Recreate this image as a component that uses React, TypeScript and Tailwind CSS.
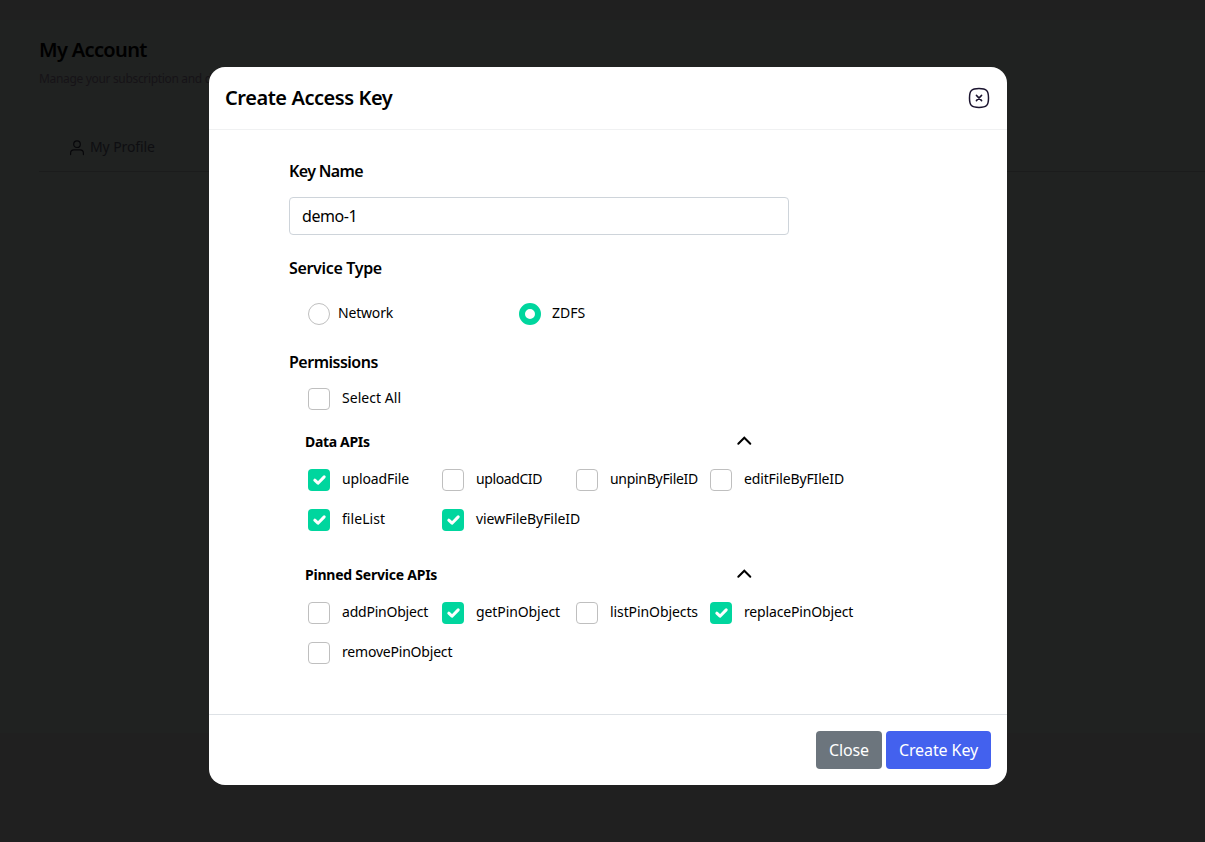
import { useState } from 'react';

type Permission = { name: string; on: boolean; tracking: string };

const dataApis: Permission[] = [
  { name: 'uploadFile', on: true, tracking: 'tracking-[-0.12px]' },
  { name: 'uploadCID', on: false, tracking: 'tracking-[-0.4px]' },
  { name: 'unpinByFileID', on: false, tracking: 'tracking-[-0.29px]' },
  { name: 'editFileByFIleID', on: false, tracking: 'tracking-[-0.14px]' },
  { name: 'fileList', on: true, tracking: 'tracking-[0.05px]' },
  { name: 'viewFileByFileID', on: true, tracking: 'tracking-[-0.08px]' },
];

const pinnedApis: Permission[] = [
  { name: 'addPinObject', on: false, tracking: 'tracking-[-0.22px]' },
  { name: 'getPinObject', on: true, tracking: 'tracking-[-0.09px]' },
  { name: 'listPinObjects', on: false, tracking: 'tracking-[-0.09px]' },
  { name: 'replacePinObject', on: true, tracking: 'tracking-[-0.16px]' },
  { name: 'removePinObject', on: false, tracking: 'tracking-[-0.2px]' },
];

function Checkbox({ name, on, tracking }: Permission) {
  const [checked, setChecked] = useState(on);
  return (
    <button
      type="button"
      role="checkbox"
      aria-checked={checked}
      onClick={() => setChecked(!checked)}
      className="flex h-[22px] items-start gap-3 text-left text-sm leading-5 whitespace-nowrap"
    >
      <span
        className={
          checked
            ? 'flex size-[22px] shrink-0 items-center justify-center rounded bg-[#00d69e]'
            : 'size-[22px] shrink-0 rounded border border-[#bfbfbf] bg-white'
        }
      >
        {checked && (
          <svg viewBox="0 0 22 22" className="size-[22px]" fill="none" stroke="white" strokeWidth="3" strokeLinecap="round" strokeLinejoin="round">
            <path d="M6.8 11.2l3.200 3 6.200-6.300" />
          </svg>
        )}
      </span>
      <span className={tracking}>{name}</span>
    </button>
  );
}

function Section({ title, tracking, items }: { title: string; tracking: string; items: Permission[] }) {
  return (
    <section>
      <div className="ml-4 flex h-5 w-[447px] items-start justify-between text-sm leading-5 font-bold">
        <h3 className={tracking}>{title}</h3>
        <svg viewBox="0 0 16 10" className="mt-1 h-2.5 w-4" fill="none" stroke="black" strokeWidth="2" strokeLinecap="round">
          <path d="M2.3 7.700L8.300 1.700l6 6" />
        </svg>
      </div>
      <div className="mt-[17px] ml-[19px] grid grid-cols-[repeat(4,134px)] gap-y-[18px]">
        {items.map((p) => (
          <Checkbox key={p.name} {...p} />
        ))}
      </div>
    </section>
  );
}

export default function App() {
  return (
    <div className="relative h-[842px] overflow-hidden bg-[#202020] pt-5 font-['Noto_Sans',sans-serif] text-black">
      <div className="h-[713px] bg-[#202221] pt-[15px]">
        <h1 className="ml-[39px] text-xl leading-[30px] font-semibold tracking-[-0.65px]">My Account</h1>
        <p className="mt-[5px] ml-[39px] text-xs leading-[18px] tracking-[-0.33px] text-[#161317]">Manage your subscription and de</p>
        <div className="mt-[49px] ml-[39px] flex h-[35px] items-start border-b border-[#1b1c1c] pl-[30px] text-sm leading-5 text-[#0e0e11]">
          <svg viewBox="0 0 16 16" className="mt-[3px] size-4" fill="none" stroke="#07070a" strokeWidth="1.2" strokeLinecap="round">
            <circle cx="8" cy="4.2" r="3.3" />
            <path d="M1.6 14.6v-1.4c0-2 1.5-3.3 3.4-3.3h6c1.900 0 3.400 1.300 3.400 3.300v1.400" />
          </svg>
          <span className="ml-[5px] tracking-[-0.1px]">My Profile</span>
        </div>
      </div>

      <div className="absolute inset-0 flex items-start justify-start pt-[67px] pl-[209px]">
        <div role="dialog" className="flex h-[718px] w-[798px] flex-col rounded-2xl bg-white">
          <header className="flex h-[63px] shrink-0 items-start justify-between border-b border-[#f0f1f2] px-4 pt-4">
            <h2 className="text-xl leading-[30px] font-semibold tracking-[-0.44px]">Create Access Key</h2>
            <button type="button" aria-label="Close dialog" className="mt-[3px]">
              <svg viewBox="0 0 24 24" className="size-6" fill="none" stroke="#1c1530" strokeWidth="1.5" strokeLinecap="round" strokeLinejoin="round">
                <path d="M12 2.500C4.500 2.500 2.500 4.500 2.500 12S4.500 21.500 12 21.500 21.500 19.500 21.500 12 19.500 2.500 12 2.500z" />
                <path d="M9.4 14.600l5.200-5.200M14.600 14.600L9.400 9.400" />
              </svg>
            </button>
          </header>

          <main className="flex-1 px-20 pt-[29px]">
            <h3 className="font-semibold tracking-[-0.63px]">Key Name</h3>
            <input
              defaultValue="demo-1"
              className="mt-3.5 block h-[38px] w-[500px] rounded border border-[#ced4da] px-3 text-base tracking-[-0.45px] outline-none"
            />
            <h3 className="mt-[21px] font-semibold tracking-[-0.33px]">Service Type</h3>
            <div className="mt-[23px] ml-[19px] grid h-[22px] grid-cols-[211px_211px] text-sm leading-5">
              <div className="flex items-start gap-2">
                <span className="size-[22px] rounded-full border border-[#bfbfbf]" />
                <span className="tracking-[-0.18px]">Network</span>
              </div>
              <div className="flex items-start gap-[11px]">
                <span className="size-[22px] rounded-full border-[6px] border-[#00d69e]" />
                <span className="tracking-[0px]">ZDFS</span>
              </div>
            </div>
            <h3 className="mt-[25px] font-semibold tracking-[-0.5px]">Permissions</h3>
            <div className="mt-3.5 mb-[22px] ml-[19px]">
              <Checkbox name="Select All" on={false} tracking="tracking-[0.04px]" />
            </div>
            <Section title="Data APIs" tracking="tracking-[-0.33px]" items={dataApis} />
            <div className="h-[34px]" />
            <Section title="Pinned Service APIs" tracking="tracking-[-0.23px]" items={pinnedApis} />
          </main>

          <footer className="flex h-[71px] shrink-0 justify-end gap-1 border-t border-[#dee2e6] px-4 pt-4 text-white">
            <button type="button" className="h-[38px] w-[66px] rounded bg-[#6c757d] tracking-[-0.1px]">Close</button>
            <button type="button" className="h-[38px] w-[105px] rounded bg-[#4361ee] tracking-[-0.1px]">Create Key</button>
          </footer>
        </div>
      </div>
    </div>
  );
}
